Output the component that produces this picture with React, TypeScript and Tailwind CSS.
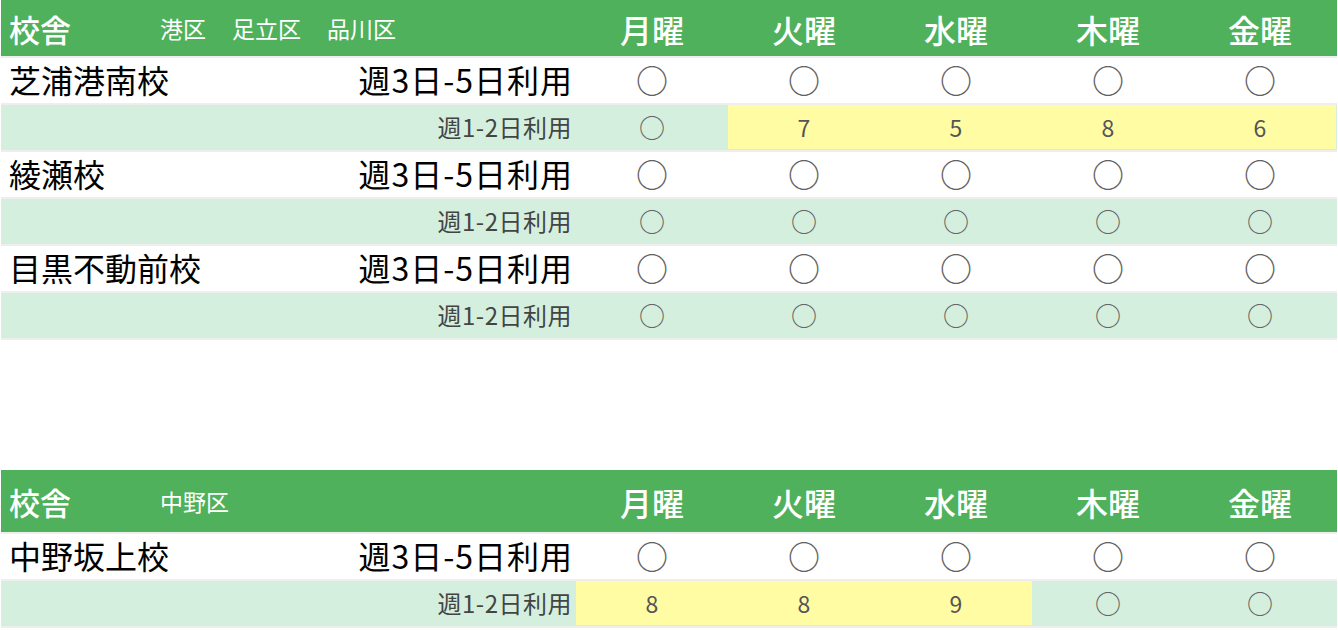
const DAYS = ["月曜", "火曜", "水曜", "木曜", "金曜"];

interface School {
  name: string;
  sub: (string | null)[]; // null => ○, string => count (yellow)
}

interface Block {
  districts: string[];
  headerClass: string;
  schools: School[];
}

const BLOCKS: Block[] = [
  {
    districts: ["港区", "足立区", "品川区"],
    headerClass: "h-[58px] pt-[1px]",
    schools: [
      { name: "芝浦港南校", sub: [null, "7", "5", "8", "6"] },
      { name: "綾瀬校", sub: [null, null, null, null, null] },
      { name: "目黒不動前校", sub: [null, null, null, null, null] },
    ],
  },
  {
    districts: ["中野区"],
    headerClass: "h-[64px] pt-[1px]",
    schools: [{ name: "中野坂上校", sub: ["8", "8", "9", null, null] }],
  },
];

function HeaderRow({ block }: { block: Block }) {
  return (
    <div className={`flex bg-[#4fb15b] text-white border-b-2 border-[#eeeeee] ${block.headerClass}`}>
      <div className="w-[575px] flex items-center">
        <span className="w-[159px] pl-[8px] text-[31px] font-medium leading-none">校舎</span>
        <div className="flex gap-[26px] text-[23px] leading-none">
          {block.districts.map((d) => (
            <span key={d}>{d}</span>
          ))}
        </div>
      </div>
      {DAYS.map((d) => (
        <div key={d} className="w-[152px] flex items-center justify-center text-[32px] font-medium leading-none">
          {d}
        </div>
      ))}
    </div>
  );
}

function SchoolRows({ school }: { school: School }) {
  return (
    <>
      <div className="flex h-[47px] pb-[3px] bg-white border-b-2 border-[#eeeeee]">
        <div className="w-[575px] flex items-center justify-between pl-[8px] pr-[3px] text-[32px] text-black leading-none">
          <span>{school.name}</span>
          <span className="tracking-[1px]">週3日-5日利用</span>
        </div>
        {DAYS.map((d) => (
          <div key={d} className="w-[152px] flex items-center justify-center text-[32px] font-medium text-[#626262] leading-none">
            ○
          </div>
        ))}
      </div>
      <div className="flex h-[47px] pb-[1px] bg-[#d5efdf] border-b-2 border-[#eeeeee]">
        <div className="w-[575px] flex items-center justify-end pr-[4px] text-[24px] tracking-[0.5px] text-[#444444] leading-none">
          週1-2日利用
        </div>
        {school.sub.map((v, i) =>
          v === null ? (
            <div key={i} className="w-[152px] flex items-center justify-center text-[26px] text-[#626262] leading-none">
              ○
            </div>
          ) : (
            <div key={i} className="w-[152px] flex items-center justify-center bg-[#fffca3] text-[23px] text-[#555555] leading-none">
              {v}
            </div>
          )
        )}
      </div>
    </>
  );
}

export default function App() {
  return (
    <div
      className="w-[1338px] h-[630px] bg-white overflow-hidden px-px"
      style={{ fontFamily: '"Noto Sans CJK JP", "Noto Sans", sans-serif' }}
    >
      {BLOCKS.map((block, i) => (
        <div key={i} className={i > 0 ? "mt-[130px]" : ""}>
          <HeaderRow block={block} />
          {block.schools.map((s) => (
            <SchoolRows key={s.name} school={s} />
          ))}
        </div>
      ))}
    </div>
  );
}
